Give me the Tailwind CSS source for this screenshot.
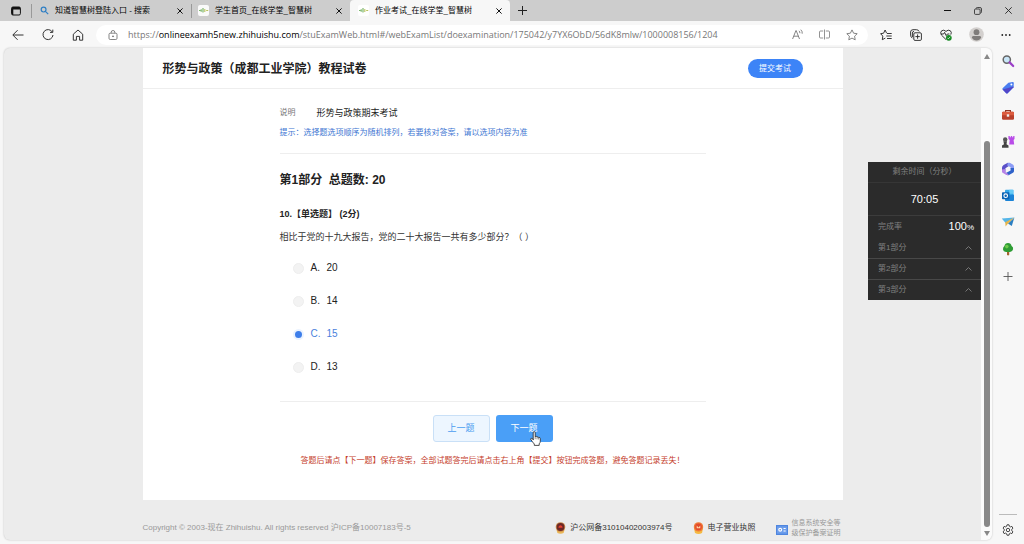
<!DOCTYPE html>
<html lang="zh-CN">
<head>
<meta charset="utf-8">
<title>作业考试_在线学堂_智慧树</title>
<script src="https://cdn.jsdelivr.net/npm/@tailwindcss/browser@4"></script>
</head>
<body class="flex h-screen flex-col overflow-hidden bg-[#f7f7f7] font-['Liberation_Sans','Noto_Sans_CJK_SC',sans-serif] text-[#222]">

<!-- Tab strip -->
<header class="flex h-[21px] shrink-0 items-stretch bg-[#cdcdcd] text-[8px] text-black">
  <button aria-label="标签操作" class="flex w-[31px] items-center justify-center">
    <svg class="size-[10px]" viewBox="0 0 10 10"><rect x=".6" y="1" width="8.8" height="8" rx="1.4" fill="none" stroke="#111"/><path d="M.6 3.4V2Q.8 1 2 1h6q1.2 0 1.4 1v1.4zM.6 3.4h1.7V9Q.6 9 .6 7.8z" fill="#111"/></svg>
  </button>
  <div class="flex w-40 items-center pr-1.5">
    <span class="mr-2 h-3.5 w-px bg-[#999]"></span>
    <svg class="size-[9px]" viewBox="0 0 9 9" fill="none" stroke="#2f7fc4" stroke-width="1.2"><circle cx="3.6" cy="3.6" r="2.4"/><path d="M5.4 5.4 8.2 8.2"/></svg>
    <span class="ml-1.5 flex-1 whitespace-nowrap">知道智慧树登陆入口 - 搜索</span>
    <button aria-label="关闭标签页" class="p-0.5"><svg class="size-[6px]" viewBox="0 0 6 6" stroke="#111"><path d="M.4.4l5.2 5.2M5.6.4.4 5.6"/></svg></button>
  </div>
  <div class="flex w-[159px] items-center pr-1.5">
    <span class="mr-1.5 h-3.5 w-px bg-[#999]"></span>
    <svg class="size-[11px]" viewBox="0 0 11 11"><rect width="11" height="11" rx="2" fill="#fafafa"/><path d="M1 5.5h1.5M3.2 4.2v2.6M5 3v4.6" stroke="#7cb66d" stroke-width="1.2"/><path d="M6.8 4v3M8.2 5.5h2" stroke="#b9c25c" stroke-width="1.1"/></svg>
    <span class="ml-1.5 flex-1 whitespace-nowrap">学生首页_在线学堂_智慧树</span>
    <button aria-label="关闭标签页" class="p-0.5"><svg class="size-[6px]" viewBox="0 0 6 6" stroke="#111"><path d="M.4.4l5.2 5.2M5.6.4.4 5.6"/></svg></button>
  </div>
  <div class="flex w-40 items-center rounded-t bg-[#f7f7f7] pl-2 pr-1.5">
    <svg class="size-[11px]" viewBox="0 0 11 11"><rect width="11" height="11" rx="2" fill="#fff"/><path d="M1 5.5h1.5M3.2 4.2v2.6M5 3v4.6" stroke="#7cb66d" stroke-width="1.2"/><path d="M6.8 4v3M8.2 5.5h2" stroke="#b9c25c" stroke-width="1.1"/></svg>
    <span class="ml-1.5 flex-1 whitespace-nowrap">作业考试_在线学堂_智慧树</span>
    <button aria-label="关闭标签页" class="p-0.5"><svg class="size-[6px]" viewBox="0 0 6 6" stroke="#111"><path d="M.4.4l5.2 5.2M5.6.4.4 5.6"/></svg></button>
  </div>
  <button aria-label="新建标签页" class="flex w-6 items-center justify-center"><svg class="size-[9px]" viewBox="0 0 9 9" stroke="#222"><path d="M0 4.5h9M4.5 0v9"/></svg></button>
  <div class="ml-auto flex">
    <button aria-label="最小化" class="flex w-[31px] items-center justify-center"><svg class="size-[7px]" viewBox="0 0 7 7" stroke="#111"><path d="M0 3.5h7"/></svg></button>
    <button aria-label="还原" class="flex w-[30px] items-center justify-center"><svg class="size-[8px]" viewBox="0 0 8 8" fill="none" stroke="#222" stroke-width=".8"><rect x=".5" y="2" width="5.6" height="5.4" rx="1"/><path d="M2 1.6Q2.2.5 3.3.5h2.6Q7.5.5 7.5 2v2.8q0 1-1 1.3"/></svg></button>
    <button aria-label="关闭" class="flex w-[31px] items-center justify-center"><svg class="size-[7px]" viewBox="0 0 7 7" stroke="#222" stroke-width=".9"><path d="M.3.3l6.4 6.4M6.7.3.3 6.7"/></svg></button>
  </div>
</header>

<!-- Address bar -->
<nav class="flex h-[27px] shrink-0 items-center px-[3px]">
  <button aria-label="后退" class="flex w-[30px] justify-center"><svg class="size-[12px]" viewBox="0 0 12 12" fill="none" stroke="#333"><path d="M11.5 6H1M5.6 1.2.8 6l4.8 4.8"/></svg></button>
  <button aria-label="刷新" class="flex w-[30px] justify-center"><svg class="size-[12px]" viewBox="0 0 12 12" fill="none" stroke="#333"><path d="M10.3 3A5 5 0 1 0 11 6M10.8.6v2.8H8"/></svg></button>
  <button aria-label="主页" class="flex w-[30px] justify-center"><svg class="size-[12px]" viewBox="0 0 12 12" fill="none" stroke="#333" stroke-linejoin="round"><path d="M1.3 5.2 6 1l4.7 4.2v6H7.6V7.4H4.4v3.8H1.3z"/></svg></button>
  <div class="ml-[3px] flex h-5 flex-1 items-center rounded-full bg-white pl-3 pr-[3px]">
    <svg class="size-[10px]" viewBox="0 0 10 10" fill="none" stroke="#666" stroke-width=".8"><rect x="1" y="3.2" width="8" height="6.3" rx="1.2"/><path d="M3.2 3.2V2.3a1.8 1.8 0 0 1 3.6 0v.9"/><circle cx="5" cy="6.3" r=".5" fill="#666"/></svg>
    <div role="textbox" aria-label="地址" class="ml-2.5 flex-1 whitespace-nowrap font-['Open_Sans','Noto_Sans',sans-serif] text-[9px] text-[#777]">https://<span class="text-black">onlineexamh5new.zhihuishu.com</span>/stuExamWeb.html#/webExamList/doexamination/175042/y7YX6ObD/56dK8mlw/1000008156/1204</div>
    <button aria-label="朗读此页内容" class="flex w-[27px] justify-center"><svg class="size-[11px]" viewBox="0 0 11 11" fill="none" stroke="#666" stroke-width=".8"><path d="M.6 10 3.9 1.6h.3L7.5 10M1.8 7.2h4.5M7 1.8q1 1 .9 2.4M8.8.7q1.8 1.8 1.4 4"/></svg></button>
    <button aria-label="拆分窗口" class="flex w-[27px] justify-center"><svg class="size-[11px]" viewBox="0 0 11 11" fill="none" stroke="#777" stroke-width=".8"><path d="M4.2 2H1.5q-1 0-1 1v5q0 1 1 1h2.7M6.8 2h2.7q1 0 1 1v5q0 1-1 1H6.8M5.5.5v10"/></svg></button>
    <button aria-label="收藏此页" class="flex w-[27px] justify-center"><svg class="size-[12px]" viewBox="0 0 12 12" fill="none" stroke="#666" stroke-width=".8" stroke-linejoin="round"><path d="m6 .9 1.6 3.3 3.6.5-2.6 2.5.6 3.6L6 9.1l-3.2 1.7.6-3.6L.8 4.7l3.6-.5z"/></svg></button>
  </div>
  <div class="ml-[3px] flex items-center">
    <button aria-label="收藏夹" class="flex w-[30px] justify-center"><svg class="size-[12px]" viewBox="0 0 12 12" fill="none" stroke="#222" stroke-width=".9" stroke-linejoin="round"><path d="M6.6 4.2 5.1 1 3.6 4.2.6 4.7l2.2 2.4-.5 3.6 3-1.6M7 4.5h4.7M6.3 7h5.4M7 9.5h4.7"/></svg></button>
    <button aria-label="集锦" class="flex w-[30px] justify-center"><svg class="size-[12px]" viewBox="0 0 12 12" fill="none" stroke="#222" stroke-width=".9"><rect x="3.8" y="3.8" width="7.6" height="7.6" rx="1.2"/><path d="M7.6 5.4v4.4M5.4 7.6h4.4M2.4 9.2Q.6 8 .6 6V3Q.6.7 3 .7h3.4q2 0 2.8 1.8M2.4 8V4q0-1.6 1.6-1.6"/></svg></button>
    <button aria-label="浏览器概要" class="flex w-[30px] justify-center"><svg class="size-[12px]" viewBox="0 0 12 12" fill="none" stroke="#222" stroke-width=".9"><path d="M6 10.6 1.4 6Q-.2 3.6 1.6 1.8 3.8.2 6 2.4 8.2.2 10.4 1.8 12 3.4 10.8 5.6M1 5h2.6l1-1.6 1.6 3.2L7.4 5h2"/><circle cx="8.8" cy="8.8" r="2.9" fill="#178a24" stroke="none"/><path d="m7.4 8.8 1 1 1.8-2" stroke="#fff" stroke-width=".7"/></svg></button>
    <button aria-label="个人资料" class="flex w-[30px] justify-center"><svg class="size-[15px]" viewBox="0 0 15 15"><circle cx="7.5" cy="7.5" r="7.3" fill="#d3d0ce"/><circle cx="7.5" cy="5.2" r="2.9" fill="#7f7c7a"/><path d="M2.8 10.4Q2.8 8.9 4.3 8.9h6.4q1.5 0 1.5 1.5-1.4 3-4.7 3t-4.7-3" fill="#7f7c7a"/></svg></button>
    <button aria-label="设置及其他" class="flex w-[30px] justify-center"><svg class="size-[10px]" viewBox="0 0 10 10" fill="#222"><circle cx="1.3" cy="5" r=".9"/><circle cx="5" cy="5" r=".9"/><circle cx="8.7" cy="5" r=".9"/></svg></button>
  </div>
</nav>

<div class="flex min-h-0 flex-1">
  <!-- Web page -->
  <div class="relative mb-1 ml-1 flex min-w-0 flex-1 overflow-hidden rounded-md bg-[#ececec] shadow-[0_0_2px_#bbb]">
    <div class="flex min-w-0 flex-1 flex-col">
      <main class="mx-auto w-full max-w-[700px] bg-white pb-[31px]">
        <div class="flex h-[41px] items-center justify-between border-b border-[#eee] pl-5 pr-10">
          <h1 class="pt-0.5 text-[12px] font-bold text-[#222]">形势与政策（成都工业学院）教程试卷</h1>
          <button class="h-[19px] w-[55px] rounded-full bg-[#3d84f7] pt-px text-[8px] text-white">提交考试</button>
        </div>
        <div class="mx-auto max-w-[426px]">
          <section class="border-b border-[#eee] pb-3 pt-4">
            <div class="flex items-center leading-4"><span class="w-[37px] text-[8px] text-[#777]">说明</span><span class="text-[9px]">形势与政策期末考试</span></div>
            <p class="mt-1 text-[8px] leading-4 text-[#4076d2]">提示：选择题选项顺序为随机排列，若要核对答案，请以选项内容为准</p>
          </section>
          <h2 class="mt-4 whitespace-pre text-[12px] font-bold leading-5">第1部分  总题数: 20</h2>
          <h3 class="mt-4 text-[9px] font-bold leading-4">10.【单选题】 (2分)</h3>
          <form class="pt-[7px]">
            <fieldset>
              <legend class="text-[9px] leading-4 text-[#333]">相比于党的十九大报告，党的二十大报告一共有多少部分？（ ）</legend>
              <div class="mt-[13px] flex flex-col gap-[13px] border-b border-[#eee] pb-6 pl-[13px] text-[10px] leading-5">
                <label class="flex items-center"><input type="radio" name="q10" class="size-[11px] appearance-none rounded-full border border-[#eee] bg-[#f3f3f3]"><span class="ml-[7px] w-4">A.</span>20</label>
                <label class="flex items-center"><input type="radio" name="q10" class="size-[11px] appearance-none rounded-full border border-[#eee] bg-[#f3f3f3]"><span class="ml-[7px] w-4">B.</span>14</label>
                <label class="flex items-center text-[#4a7fdc]"><input type="radio" name="q10" checked class="size-[11px] appearance-none rounded-full border-2 border-[#eaf3ff] bg-[#3d7eea]"><span class="ml-[7px] w-4">C.</span>15</label>
                <label class="flex items-center"><input type="radio" name="q10" class="size-[11px] appearance-none rounded-full border border-[#eee] bg-[#f3f3f3]"><span class="ml-[7px] w-4">D.</span>13</label>
              </div>
            </fieldset>
            <div class="mt-[13px] flex justify-center gap-1.5 text-[9px]">
              <button type="button" class="h-[27px] w-[57px] rounded-[3px] border border-[#c9e0f7] bg-[#edf6ff] text-[#4a9df0]">上一题</button>
              <button type="button" class="relative h-[27px] w-[57px] rounded-[3px] bg-[#4a9ff7] text-white">下一题
                <svg class="absolute left-[34px] top-4 h-[15px] w-[11px]" viewBox="0 0 11 15"><path d="M3.2 9V1.8q0-1.2 1-1.2t1 1.2v3.8q1.6-.7 1.8.4 1.4-.5 1.6.5 1.7-.3 1.7 1.1v2.6q0 1.6-1.1 2.6v1.6H4.3v-1.4Q2.4 11 .9 8.6q-.5-1 .3-1.3.9-.2 2 1.2z" fill="#fff" stroke="#222" stroke-width=".8"/><path d="M5.2 5.5v2.7M7 6.2v2.2M8.6 6.7v1.8" stroke="#222" stroke-width=".5"/></svg>
              </button>
            </div>
          </form>
          <p class="mt-[11px] text-center text-[8px] leading-4 text-[#c5402b]">答题后请点【下一题】保存答案，全部试题答完后请点击右上角【提交】按钮完成答题，避免答题记录丢失！</p>
        </div>
      </main>
      <footer class="mx-auto mt-auto flex w-full max-w-[700px] items-center pb-0.5 text-[8px]">
        <p class="flex-1 text-[#999]">Copyright © 2003-现在 Zhihuishu. All rights reserved 沪ICP备10007183号-5</p>
        <a href="#" class="flex items-center gap-1 text-[#333]"><svg class="h-3 w-[11px]" viewBox="0 0 11 12"><path d="M1.4 7.5h8.2l-1 3.6q-3.1 1.5-6.2 0z" fill="#eab657"/><circle cx="5.5" cy="5" r="4.8" fill="#c98b4a"/><circle cx="5.5" cy="5" r="3.9" fill="#6d2827"/><path d="M3.4 5.8q0-2.5 2.1-2.5t2.1 2.5z" fill="#e8402f"/></svg>沪公网备31010402003974号</a>
        <a href="#" class="ml-5 flex items-center gap-1 text-[#333]"><svg class="h-3 w-[11px]" viewBox="0 0 11 12"><path d="m1 6.5 1 4.4q3.5 2 7 0l1-4.4z" fill="#f5b942"/><circle cx="5.5" cy="4.9" r="4.7" fill="#ef7a36"/><circle cx="5.5" cy="4.9" r="3.3" fill="#e34a2c"/><path d="m3.7 3.6 1.8 1.8 1.8-1.8v2.6H3.7z" fill="#ffd9a8"/></svg>电子营业执照</a>
        <a href="#" class="ml-5 flex items-center gap-1 text-[7px] leading-[10px] text-[#999]"><svg class="mt-1 h-2.5 w-3" viewBox="0 0 12 10"><rect width="12" height="10" fill="#4f86df"/><rect x="1" y="1.3" width="10" height="7.4" fill="#6c9deb"/><circle cx="4.2" cy="4.8" r="2" fill="#fff"/><circle cx="4.2" cy="4.8" r=".8" fill="#4f86df"/><path d="M7.5 3.5h2.2M7.5 6h2.2" stroke="#fff"/></svg><span class="w-[51px]">信息系统安全等<br>级保护备案证明</span></a>
      </footer>
    </div>
    <!-- Page scrollbar -->
    <div class="flex w-[11px] flex-col items-center bg-[#fbfbfb] pb-1 pt-1.5" aria-hidden="true">
      <svg class="h-[5px] w-[6px]" viewBox="0 0 6 5"><path d="M3 0 6 5H0z" fill="#888"/></svg>
      <div class="mb-1 mt-[82px] w-[6px] flex-1 rounded-full bg-[#888]"></div>
      <svg class="h-[5px] w-[6px]" viewBox="0 0 6 5"><path d="M3 5 6 0H0z" fill="#888"/></svg>
    </div>
    <!-- Floating progress panel -->
    <aside class="absolute right-[11px] top-[114px] w-[113px] bg-[#2b2b2b] text-[8px] text-[#808080]">
      <p class="border-b border-[#363636] text-center leading-5">剩余时间（分秒）</p>
      <p class="border-b border-[#3c3c3c] text-center text-[11px] leading-8 text-white">70:05</p>
      <p class="flex items-center justify-between pl-2.5 pr-[7px] leading-5">完成率<span class="text-[8px] text-white"><span class="text-[11px]">100</span>%</span></p>
      <button class="flex w-full items-center justify-between border-b border-[#484848] pl-2.5 pr-[9px] leading-5">第1部分<svg class="h-1 w-[7px]" viewBox="0 0 7 4" fill="none" stroke="#777"><path d="m.5 3.5 3-3 3 3"/></svg></button>
      <button class="flex w-full items-center justify-between border-b border-[#484848] pl-2.5 pr-[9px] leading-5">第2部分<svg class="h-1 w-[7px]" viewBox="0 0 7 4" fill="none" stroke="#777"><path d="m.5 3.5 3-3 3 3"/></svg></button>
      <button class="flex w-full items-center justify-between pl-2.5 pr-[9px] leading-5">第3部分<svg class="h-1 w-[7px]" viewBox="0 0 7 4" fill="none" stroke="#777"><path d="m.5 3.5 3-3 3 3"/></svg></button>
    </aside>
  </div>

  <!-- Browser sidebar -->
  <aside class="flex w-8 flex-col items-center gap-[13px] pb-2 pt-1.5">
    <button aria-label="搜索"><svg class="size-[14px]" viewBox="0 0 14 14"><circle cx="5.8" cy="5.6" r="3.6" fill="#c9e6f8" stroke="#666" stroke-width="1.5"/><path d="m8.6 8.4 3.6 3.6" stroke="#9b3fc8" stroke-width="2.2" stroke-linecap="round"/></svg></button>
    <button aria-label="购物"><svg class="size-[14px]" viewBox="0 0 14 14"><path d="M7.4 1.8 11.8 1q1 0 1 1l-.2 4.2-6 6q-.7.6-1.4 0L1.6 8.6q-.6-.7 0-1.4z" fill="#4a7df0"/><path d="m1.6 8.6 11-3-.1.7-5.9 5.9q-.7.6-1.4 0z" fill="#5146c8"/><circle cx="10.4" cy="3.4" r="1" fill="#fff"/></svg></button>
    <button aria-label="工具"><svg class="size-[14px]" viewBox="0 0 14 14"><path d="M4.6 4V2.5h4.8V4" fill="none" stroke="#8c3524" stroke-width="1.2"/><rect x="1" y="3.8" width="12" height="8" rx="1.2" fill="#b9402b"/><path d="M1 4.8q0-1 1.2-1h9.6q1.2 0 1.2 1v2.5H1z" fill="#dc5b3e"/><rect x="5.8" y="6.3" width="2.4" height="2.4" fill="#eee"/></svg></button>
    <button aria-label="游戏"><svg class="size-[14px]" viewBox="0 0 14 14"><path d="M7.4 1h1.4v1.2h1V1h1.4v1.2h1V1h1.3v3l-.9 1 .6 4.6H8.2L8.7 5l-1.3-1z" fill="#b94ce8"/><circle cx="4.2" cy="4.4" r="2.2" fill="#555"/><path d="M2.4 6.2H6l-.5 3 2 1.4v2.2H1v-2.2l2-1.4z" fill="#444"/></svg></button>
    <button aria-label="Microsoft 365"><svg class="size-[14px]" viewBox="0 0 14 14"><path d="M6.8.8 2.6 2.9Q1 4 1 5.8V9l3.4 1V6.2l4.2-2.6z" fill="#5a50c8"/><path d="M6.8.8h2l3.4 2Q13 3.6 13 5v3.6L9.6 7V5.2L6.2 3.4z" fill="#8c9cf5"/><path d="M13 6v3q0 1-1 1.7l-4 2.2q-1 .5-2 0L4 11.6l5.6-3.2V6z" fill="#2f62c9"/><path d="M1 7.5v2q0 1 1 1.5l3.4 1.9q1.2.4 2.4-.4L4.4 10V7z" fill="#b682e6"/></svg></button>
    <button aria-label="Outlook"><svg class="size-[14px]" viewBox="0 0 14 14"><rect x="4" y=".8" width="8.4" height="8" rx=".8" fill="#33a7ea"/><path d="M8.2.8h4.2v4H8.2z" fill="#66cbf7"/><path d="M4 6.9 13 5.4V11q0 1-1 1H5q-1 0-1-1z" fill="#1b83d6"/><rect x="1" y="3.2" width="7.4" height="7" rx=".8" fill="#0b64b5"/><circle cx="4.7" cy="6.7" r="1.8" fill="none" stroke="#fff" stroke-width="1.1"/></svg></button>
    <button aria-label="发送"><svg class="size-[14px]" viewBox="0 0 14 14"><path d="M.8 2.4 13.4 1.6 4.6 7z" fill="#54b5e8"/><path d="M13.4 1.6 10.8 10 7 7.4z" fill="#2b7fc2"/><path d="m4.2 6.2 9.2-4.6L7 7.4l-2.4 3z" fill="#e6b44a"/></svg></button>
    <button aria-label="树"><svg class="size-[14px]" viewBox="0 0 14 14"><path d="M6 7h2.2v5q-1.1.9-2.2 0z" fill="#a5632f"/><path d="M7 0q3 0 3.6 3 1.9 1 1.5 3.2T9 9H5Q2.2 8.6 2 6.4T3.4 3Q4 0 7 0" fill="#2f9d35"/><circle cx="5.8" cy="3.6" r="1.8" fill="#6fca4c"/></svg></button>
    <button aria-label="添加"><svg class="size-[14px]" viewBox="0 0 14 14" stroke="#555" stroke-width=".9"><path d="M2.5 6.5h9M7 2v9"/></svg></button>
    <div class="mt-auto w-[18px] border-t border-[#bbb]"></div>
    <button aria-label="设置" class="-mt-1"><svg class="size-[12px]" viewBox="0 0 12 12" fill="none" stroke="#333" stroke-width=".9" stroke-linejoin="round"><path d="M5 .8h2l.4 1.5 1 .6 1.5-.5 1 1.8-1.1 1v1.6l1.1 1-1 1.8-1.5-.5-1 .6L7 11.2H5l-.4-1.5-1-.6-1.5.5-1-1.8 1.1-1V5.2l-1.1-1 1-1.8 1.5.5 1-.6z"/><circle cx="6" cy="6" r="1.7"/></svg></button>
  </aside>
</div>
</body>
</html>
